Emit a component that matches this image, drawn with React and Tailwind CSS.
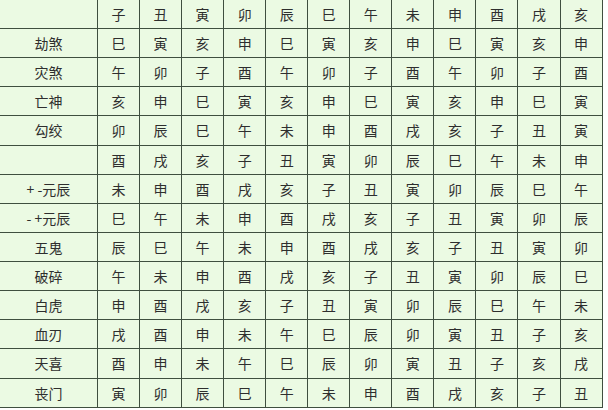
import React from "react";

const header = ["", "子", "丑", "寅", "卯", "辰", "巳", "午", "未", "申", "酉", "戌", "亥"];
const rows = [
  ["劫煞", "巳 寅 亥 申 巳 寅 亥 申 巳 寅 亥 申"],
  ["灾煞", "午 卯 子 酉 午 卯 子 酉 午 卯 子 酉"],
  ["亡神", "亥 申 巳 寅 亥 申 巳 寅 亥 申 巳 寅"],
  ["勾绞", "卯 辰 巳 午 未 申 酉 戌 亥 子 丑 寅"],
  ["", "酉 戌 亥 子 丑 寅 卯 辰 巳 午 未 申"],
  ["+ -元辰", "未 申 酉 戌 亥 子 丑 寅 卯 辰 巳 午"],
  ["- +元辰", "巳 午 未 申 酉 戌 亥 子 丑 寅 卯 辰"],
  ["五鬼", "辰 巳 午 未 申 酉 戌 亥 子 丑 寅 卯"],
  ["破碎", "午 未 申 酉 戌 亥 子 丑 寅 卯 辰 巳"],
  ["白虎", "申 酉 戌 亥 子 丑 寅 卯 辰 巳 午 未"],
  ["血刃", "戌 酉 申 未 午 巳 辰 卯 寅 丑 子 亥"],
  ["天喜", "酉 申 未 午 巳 辰 卯 寅 丑 子 亥 戌"],
  ["丧门", "寅 卯 辰 巳 午 未 申 酉 戌 亥 子 丑"],
].map(([l, s]) => [l, ...s.split(" ")]);

const all = [header, ...rows];

export default function App() {
  return (
    <div className="w-[608px] h-[410px] bg-white overflow-hidden">
      <div className="grid w-[602px] -mt-px bg-[#ebfae3] border-t border-[#3f4f3f] text-[14px] text-[#2e2e2e]">
        {all.map((r, i) => (
          <div
            key={i}
            className={`grid grid-cols-[98px_repeat(12,42.06px)] ${i === 0 ? "h-[29px]" : "h-[29.13px]"}`}
          >
            {r.map((c, j) => (
              <div
                key={j}
                className="flex items-center justify-center border-r border-b border-[#3f4f3f] [font-family:'Noto_Sans_CJK_SC','Noto_Sans',sans-serif] leading-none"
              >
                {c}
              </div>
            ))}
          </div>
        ))}
      </div>
    </div>
  );
}
